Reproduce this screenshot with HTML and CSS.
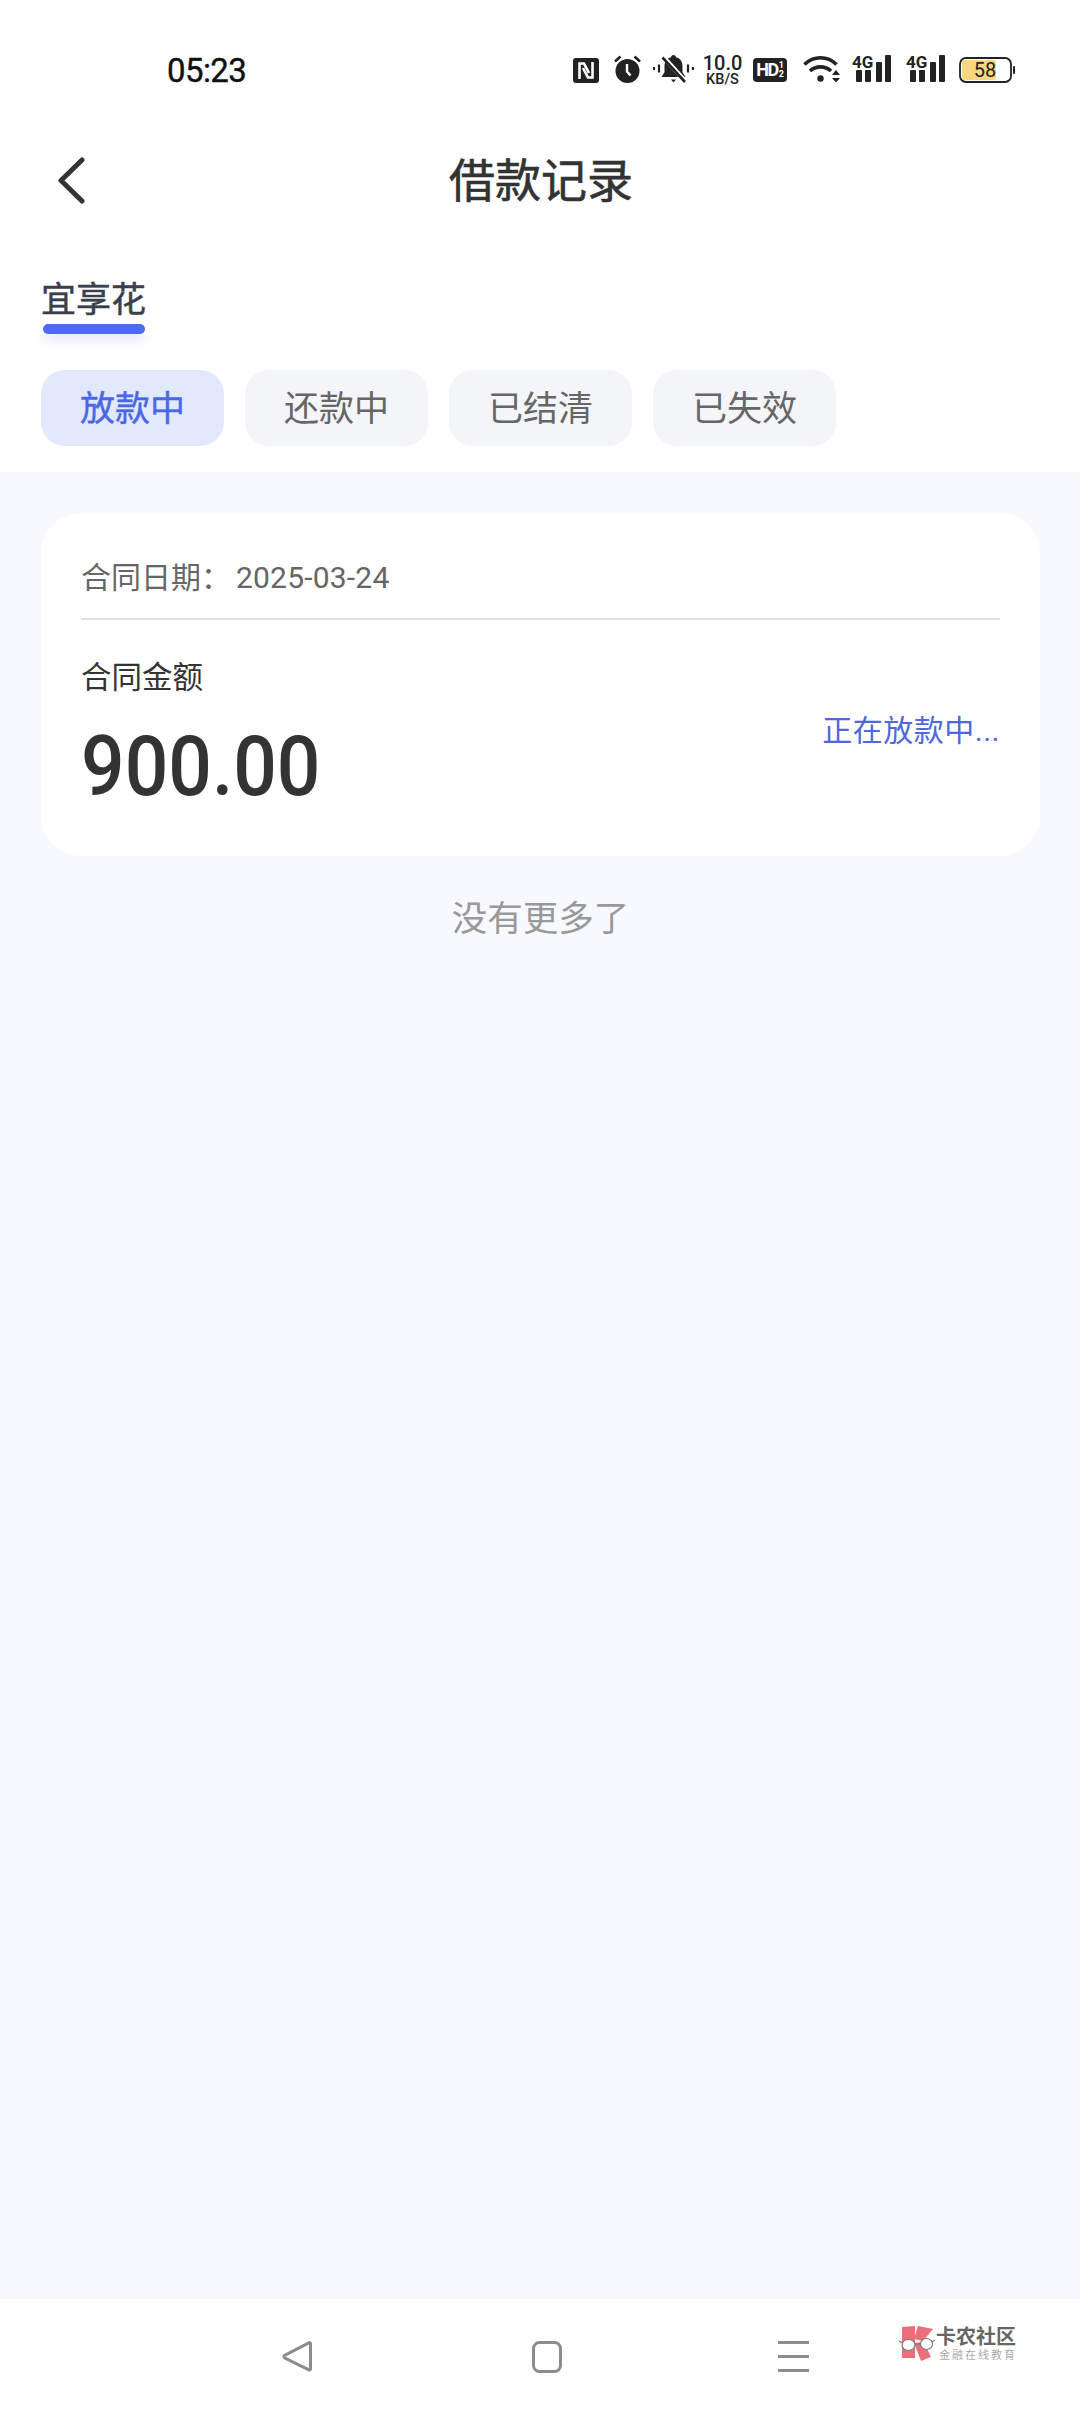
FILE: index.html
```html
<!DOCTYPE html>
<html lang="zh-CN">
<head>
<meta charset="utf-8">
<title>借款记录</title>
<link rel="stylesheet" href="styles.css">
</head>
<body>
<div class="app">
  <div class="status">
    <span class="time">05:23</span>
    <div class="status-icons">
      <svg class="si si-nfc" width="26" height="25" viewBox="0 0 26 25"><rect width="26" height="25" rx="3" fill="#222"/><path d="M6.500 21V5.500h4.500l5 9.500M19.500 4v15.500H15L10 10" fill="none" stroke="#fff" stroke-width="2.600"/></svg>
      <svg class="si si-alarm" width="27" height="28" viewBox="0 0 27 28"><circle cx="13.500" cy="16" r="12" fill="#222"/><path d="M13 9v7.500l3.500 4" fill="none" stroke="#fff" stroke-width="2.400"/><path d="M1 6.500 6.500 1.500M26 6.500 20.500 1.500" stroke="#222" stroke-width="2.600"/></svg>
      <svg class="si si-bell" width="41" height="29" viewBox="0 0 41 29"><path d="M20.500 0c1.500 0 2.300 1 2.500 2.200 4.500 1 6.500 4.500 6.500 9v6l3 4.800H8.500l3-4.800v-6c0-4.500 2-8 6.500-9C18.200 1 19 0 20.500 0Z" fill="#222"/><path d="M18 24.500h5l-2.500 3Z" fill="#222"/><path d="M10 1.500 33 27" stroke="#fff" stroke-width="4.500"/><path d="M9.500 2.500 32 27" stroke="#222" stroke-width="2.600"/><path d="M1 12v3M6 9.500v8M35 9.500v8M40 12v3" stroke="#222" stroke-width="2.200"/></svg>
      <div class="speed"><span class="speed-num">10.0</span><span class="speed-unit">KB/S</span></div>
      <div class="hd"><span class="hd-main">HD</span><span class="hd-sub"><i>1</i><i>2</i></span></div>
      <svg class="si si-wifi" width="37" height="27" viewBox="0 0 37 27"><path d="M1.500 9.500C10.500 .5 24.500 .5 33.500 9.500M7 16c6-5.500 15-5.500 21 0" fill="none" stroke="#222" stroke-width="3.600"/><circle cx="17.500" cy="23.500" r="3.200" fill="#222"/><path d="M29 20h8l-4-5ZM29 23h8l-4 4.500Z" fill="#222"/></svg>
      <svg class="si si-signal" width="39" height="33" viewBox="0 -6 39 33"><text class="sig-text" x="0" y="12.500">4G</text><rect x="4" y="15" width="6" height="12" rx="1" fill="#222"/><rect x="13" y="15" width="6" height="12" rx="1" fill="#222"/><rect x="24" y="7" width="6" height="20" rx="1" fill="#222"/><rect x="33" y="0" width="6" height="27" rx="1" fill="#222"/></svg>
      <svg class="si si-signal2" width="39" height="33" viewBox="0 -6 39 33"><text class="sig-text" x="0" y="12.500">4G</text><rect x="4" y="15" width="6" height="12" rx="1" fill="#222"/><rect x="13" y="15" width="6" height="12" rx="1" fill="#222"/><rect x="24" y="7" width="6" height="20" rx="1" fill="#222"/><rect x="33" y="0" width="6" height="27" rx="1" fill="#222"/></svg>
      <svg class="si si-batt" width="56" height="26" viewBox="0 0 56 26"><rect x="3" y="3" width="34" height="20" rx="3" fill="#fad67e"/><rect x="1" y="1" width="51" height="24" rx="6" fill="none" stroke="#222" stroke-width="1.800"/><rect x="54" y="9" width="2" height="8" rx="1" fill="#222"/><text class="batt-text" x="26" y="20" text-anchor="middle">58</text></svg>
    </div>
  </div>

  <header class="topbar">
    <svg class="back" width="28" height="47" viewBox="0 0 28 47"><path d="M25 3 4 23.500 25 44" fill="none" stroke="#333" stroke-width="5" stroke-linecap="round" stroke-linejoin="round"/></svg>
    <h1 class="title">借款记录</h1>
  </header>

  <section class="filters">
    <div class="product">
      <span class="product-name">宜享花</span>
      <span class="product-bar"></span>
    </div>
    <div class="tabs">
      <span class="tab tab-active">放款中</span>
      <span class="tab">还款中</span>
      <span class="tab">已结清</span>
      <span class="tab">已失效</span>
    </div>
  </section>

  <main class="content">
    <article class="card">
      <div class="card-date">合同日期：<span class="date-val">2025-03-24</span></div>
      <div class="card-body">
        <div class="amount-col">
          <div class="amount-label">合同金额</div>
          <div class="amount">900.00</div>
        </div>
        <div class="state">正在放款中...</div>
      </div>
    </article>
    <p class="nomore">没有更多了</p>
  </main>

  <footer class="navbar">
    <svg class="nav-i nav-back" width="31" height="31" viewBox="0 0 31 31"><path d="M28.500 2.500V28a1 1 0 0 1-1.600.800L2.500 16.800a1.500 1.500 0 0 1 0-2.400L26.900 1.800a1 1 0 0 1 1.600.700Z" fill="none" stroke="#8c8c8c" stroke-width="3" stroke-linejoin="round"/></svg>
    <svg class="nav-i nav-home" width="30" height="32" viewBox="0 0 30 32"><rect x="1.500" y="1.500" width="27" height="29" rx="6" fill="none" stroke="#8c8c8c" stroke-width="3"/></svg>
    <div class="nav-i nav-menu"><i></i><i></i><i></i></div>
    <div class="logo">
      <svg class="logo-mark" width="36" height="36" viewBox="0 0 36 36"><path d="M3 2 16 1V33H3Z" fill="#ea6f7b"/><path d="M19 1 34 4 24 16 15 14Z" fill="#ea6f7b"/><path d="M15 18 25 17 32 32 22 36Z" fill="#ea6f7b"/><path d="M0 16 4 18M15 19h7M33 17l3-2" stroke="#777" stroke-width="1.200"/><ellipse cx="9.500" cy="20" rx="6.500" ry="5.500" fill="#fff" stroke="#777" stroke-width="1.200"/><ellipse cx="27.500" cy="19" rx="6" ry="5.500" fill="#fff" stroke="#777" stroke-width="1.200"/></svg>
      <div class="logo-text">
        <span class="logo-name">卡农社区</span>
        <span class="logo-sub">金融在线教育</span>
      </div>
    </div>
  </footer>
</div>
</body>
</html>
```
FILE: styles.css
```css
* { box-sizing: border-box; }
html, body { margin: 0; padding: 0; background: #fff; }
body { font-family: Roboto, "Noto Sans CJK SC", sans-serif; color: #333; }
.app { width: 1080px; height: 2412px; display: flex; flex-direction: column; overflow: hidden; background: #fff; }

.status { height: 110px; padding: 30px 65px 0 167px; display: flex; align-items: center; justify-content: space-between; }
.time { font-size: 33px; font-weight: 400; letter-spacing: -.6px; color: #111; line-height: 1; -webkit-text-stroke: .4px #111; }
.status-icons { display: flex; align-items: center; }
.si { display: block; flex: none; }
.si-alarm { margin-left: 15px; margin-top: -3px; }
.si-bell { margin-left: 12px; margin-top: -1px; }
.speed { margin-left: 9px; width: 39px; display: flex; flex-direction: column; align-items: center; color: #222; }
.speed-num { font-size: 20px; font-weight: 500; line-height: 20px; }
.speed-unit { font-size: 14.500px; font-weight: 500; line-height: 14.500px; }
.hd { margin-left: 11px; width: 34px; height: 24px; border-radius: 4px; background: #222; color: #fff; display: flex; align-items: center; justify-content: center; gap: 1px; }
.hd-main { font-size: 18px; font-weight: 700; letter-spacing: -1.500px; line-height: 1; }
.hd-sub { display: flex; flex-direction: column; font-size: 9px; font-weight: 700; line-height: 9px; }
.hd-sub i { font-style: normal; }
.si-wifi { margin-left: 16px; margin-top: -4px; }
.si-signal { margin-left: 12px; margin-top: -9px; }
.si-signal2 { margin-left: 15px; margin-top: -9px; }
.si-batt { margin-left: 14px; }
.sig-text { font-family: Roboto, sans-serif; font-size: 17px; font-weight: 700; fill: #222; }
.batt-text { font-family: Roboto, sans-serif; font-size: 20px; font-weight: 400; fill: #222; }

.topbar { height: 140px; padding: 0 57px; display: grid; grid-template-columns: 1fr auto 1fr; align-items: center; }
.back { display: block; }
.title { margin: 0; padding: 2px 0 0 2px; font-size: 46px; font-weight: 400; -webkit-text-stroke: .6px #333; line-height: 60px; color: #333; }

.filters { padding: 27px 41px 26px; }
.product { display: inline-flex; flex-direction: column; align-items: center; }
.product-name { font-size: 35px; padding-top: 2px; line-height: 44px; color: #3a3f4c; font-weight: 400; -webkit-text-stroke: .5px #3a3f4c; }
.product-bar { display: block; width: 102px; height: 10px; margin-top: 1px; border-radius: 5px; background: #4d6bf0; box-shadow: 0 7px 10px rgba(77,107,240,.14); }
.tabs { display: flex; gap: 21px; margin-top: 36px; }
.tab { width: 183px; height: 76px; padding-bottom: 5px; border-radius: 24px; background: #f4f5f8; color: #666; font-size: 35px; display: flex; align-items: center; justify-content: center; }
.tab-active { background: #e3e9fc; color: #4a68e6; -webkit-text-stroke: .4px #4a68e6; }

.content { flex: 1; background: #f8f9fe; padding: 41px 40px 0 41px; }
.card { background: #fff; border-radius: 40px; height: 343px; padding: 0 40px; }
.card-date { height: 107px; padding-top: 45px; border-bottom: 2px solid #e0e0e0; font-size: 30px; line-height: 40px; color: #666; }
.date-val { margin-left: 5px; letter-spacing: .2px; }
.card-body { display: flex; justify-content: space-between; }
.amount-col { padding-top: 38px; }
.amount-label { font-size: 30.500px; line-height: 40px; color: #333; }
.amount { font-size: 83px; font-weight: 500; line-height: 84px; margin-top: 27px; color: #333; transform: scaleX(.925); transform-origin: left center; }
.state { font-size: 30px; letter-spacing: .5px; line-height: 40px; color: #5068dc; margin-top: 91px; }
.nomore { margin: 38px 0 0; text-align: center; font-size: 35.500px; line-height: 50px; color: #999; }

.navbar { height: 113px; padding: 26px 0 0 282px; display: flex; align-items: flex-start; background: #fff; }
.nav-i { display: block; flex: none; margin-top: 16px; }
.nav-home { margin-left: 219px; }
.nav-menu { margin-left: 216px; width: 31px; height: 31px; display: flex; flex-direction: column; justify-content: space-between; }
.nav-menu i { display: block; height: 3px; background: #8c8c8c; }
.logo { margin-left: 90px; display: flex; align-items: flex-start; gap: 1px; }
.logo-mark { display: block; flex: none; }
.logo-text { display: flex; flex-direction: column; margin-top: 2px; }
.logo-name { font-size: 20px; font-weight: 700; line-height: 20px; color: #666; white-space: nowrap; }
.logo-sub { font-size: 11px; line-height: 14px; letter-spacing: 2px; padding-left: 3px; color: #aaa; white-space: nowrap; margin-top: 2px; }
```
